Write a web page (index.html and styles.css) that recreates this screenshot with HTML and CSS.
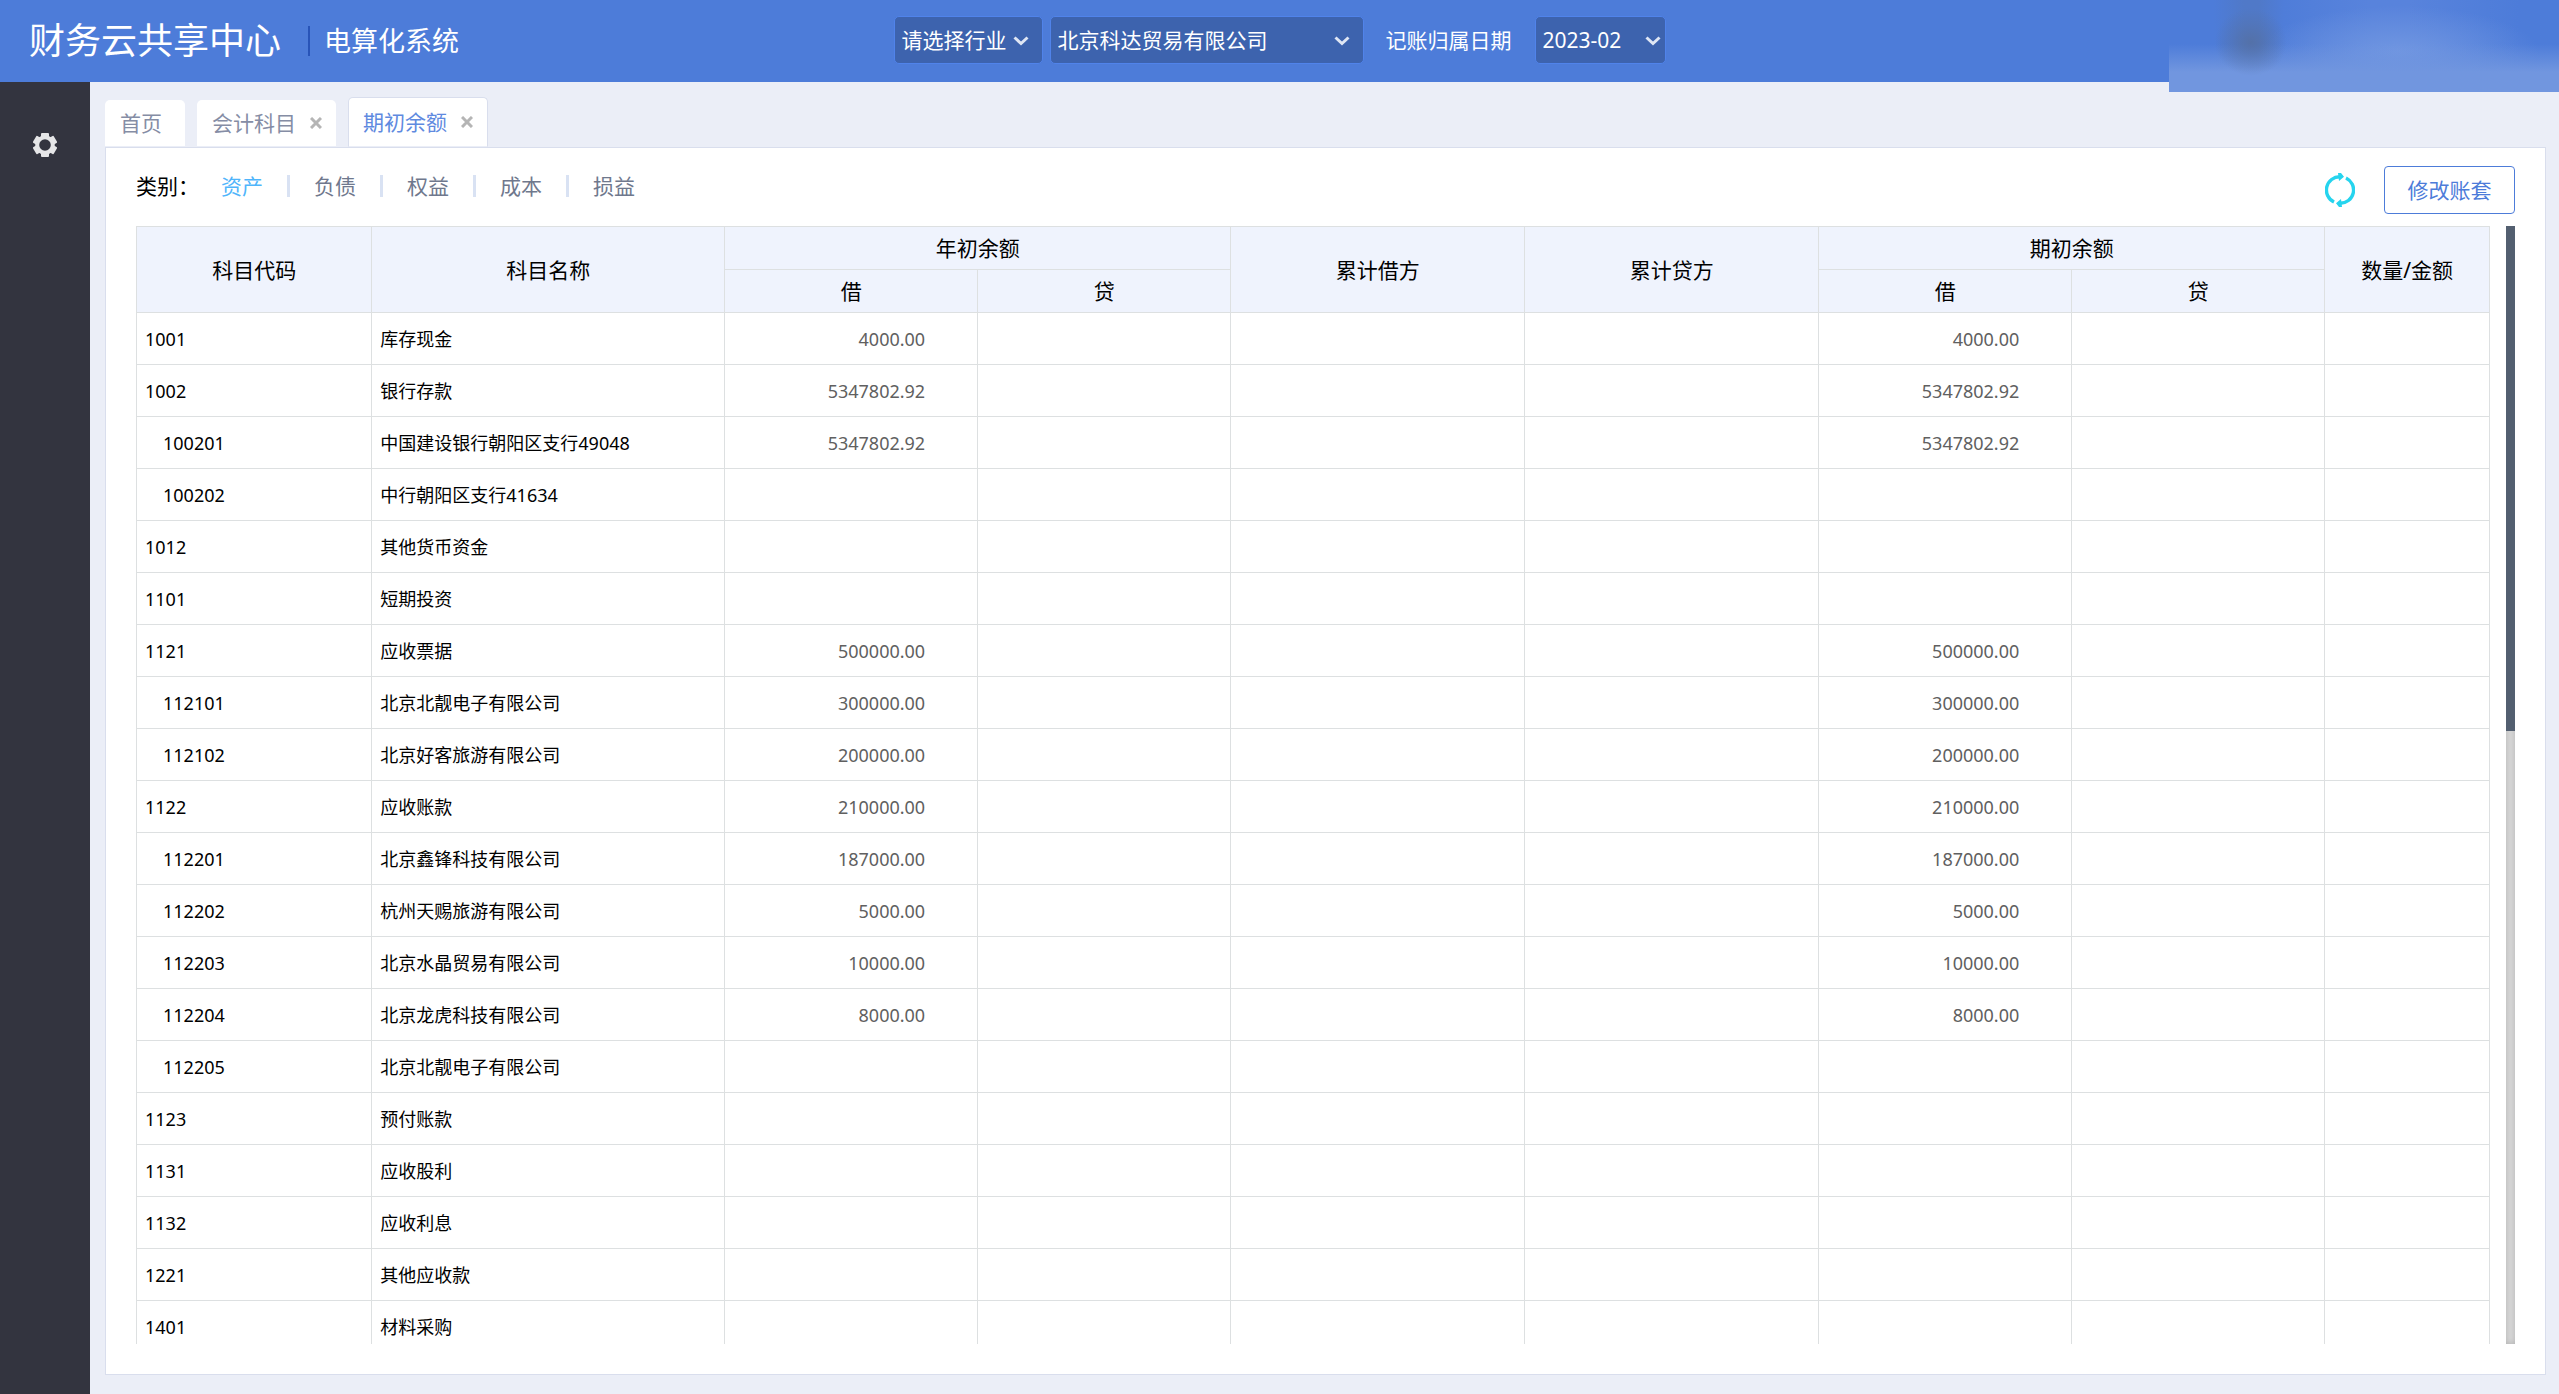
FILE: index.html
```html
<!DOCTYPE html>
<html lang="zh-CN">
<head>
    <meta charset="UTF-8">
    <meta name="viewport" content="width=device-width, initial-scale=1.0">
    <title>财务云共享中心</title>
    <link rel="stylesheet" href="styles.css">
</head>
<body>
    <header class="header">
        <div class="brand">
            <h1>财务云共享中心</h1>
            <span class="system-name">电算化系统</span>
        </div>
        <div class="filters">
            <div class="select-box industry">
                <select aria-label="行业">
                    <option>请选择行业</option>
                </select>
                <svg viewBox="0 0 16 10"><path d="M1.5 1.5 8 7.5 14.5 1.5"/></svg>
            </div>
            <div class="select-box company">
                <select aria-label="公司">
                    <option>北京科达贸易有限公司</option>
                </select>
                <svg viewBox="0 0 16 10"><path d="M1.5 1.5 8 7.5 14.5 1.5"/></svg>
            </div>
            <label for="period">记账归属日期</label>
            <div class="select-box period">
                <select id="period">
                    <option>2023-02</option>
                </select>
                <svg viewBox="0 0 16 10"><path d="M1.5 1.5 8 7.5 14.5 1.5"/></svg>
            </div>
        </div>
        <div class="user-area"></div>
    </header>

    <div class="layout">
        <aside class="sidebar">
            <button class="icon-button" aria-label="设置">
                <svg class="gear" viewBox="-12 -12 24 24">
                    <circle r="7.8"/>
                    <rect x="-4" y="-12" width="8" height="5" rx="1"/>
                    <rect x="-4" y="-12" width="8" height="5" rx="1" transform="rotate(60)"/>
                    <rect x="-4" y="-12" width="8" height="5" rx="1" transform="rotate(120)"/>
                    <rect x="-4" y="-12" width="8" height="5" rx="1" transform="rotate(180)"/>
                    <rect x="-4" y="-12" width="8" height="5" rx="1" transform="rotate(240)"/>
                    <rect x="-4" y="-12" width="8" height="5" rx="1" transform="rotate(300)"/>
                </svg>
            </button>
        </aside>

        <main class="main">
            <nav class="tabs">
                <div class="tab"><a href="#">首页</a></div>
                <div class="tab">
                    <a href="#">会计科目</a>
                    <button class="close" aria-label="关闭会计科目"><svg viewBox="0 0 12 12"><path d="M1 1l10 10M11 1L1 11"/></svg></button>
                </div>
                <div class="tab active">
                    <a href="#">期初余额</a>
                    <button class="close" aria-label="关闭期初余额"><svg viewBox="0 0 12 12"><path d="M1 1l10 10M11 1L1 11"/></svg></button>
                </div>
            </nav>

            <section class="panel">
                <div class="toolbar">
                    <span class="category-label">类别：</span>
                    <ul class="categories">
                        <li><a href="#" class="current">资产</a></li>
                        <li><a href="#">负债</a></li>
                        <li><a href="#">权益</a></li>
                        <li><a href="#">成本</a></li>
                        <li><a href="#">损益</a></li>
                    </ul>
                    <div class="actions">
                        <button class="icon-button" aria-label="刷新">
                            <svg class="refresh" viewBox="0 0 30 34">
                                <path class="arc" d="M9 29A13.300 13.300 0 0 1 15 3.700M21 5A13.300 13.300 0 0 1 15 30.300"/>
                                <path class="head" d="M13 0h3l3 3.700-5 4.300zM17 34h-3l-3-3.700 5-4.300z"/>
                            </svg>
                        </button>
                        <button class="edit-button">修改账套</button>
                    </div>
                </div>

                <div class="table-area">
                    <div class="table-scroll">
                        <table>
                            <colgroup>
                                <col class="col-code">
                                <col class="col-name">
                                <col class="col-balance">
                                <col class="col-balance">
                                <col class="col-total">
                                <col class="col-total">
                                <col class="col-balance">
                                <col class="col-balance">
                                <col class="col-quantity">
                            </colgroup>
                            <thead>
                                <tr>
                                    <th rowspan="2">科目代码</th>
                                    <th rowspan="2">科目名称</th>
                                    <th colspan="2">年初余额</th>
                                    <th rowspan="2">累计借方</th>
                                    <th rowspan="2">累计贷方</th>
                                    <th colspan="2">期初余额</th>
                                    <th rowspan="2">数量/金额</th>
                                </tr>
                                <tr>
                                    <th>借</th>
                                    <th>贷</th>
                                    <th>借</th>
                                    <th>贷</th>
                                </tr>
                            </thead>
                            <tbody id="accounts"></tbody>
                        </table>
                    </div>
                    <div class="scrollbar"><div class="thumb"></div></div>
                </div>
            </section>
        </main>
    </div>

    <script src="script.js"></script>
</body>
</html>
```

FILE: styles.css
```css
* {
    margin: 0;
    padding: 0;
    box-sizing: border-box;
}

body {
    font-family: "Noto Sans", "Noto Sans CJK SC", sans-serif;
    font-size: 21px;
    line-height: 30px;
    height: 100vh;
    display: flex;
    flex-direction: column;
    background: #ebeef7;
    color: #000;
    overflow: hidden;
}

a {
    color: inherit;
    text-decoration: none;
}

button,
select {
    font: inherit;
    color: inherit;
    background: none;
    border: none;
    cursor: pointer;
}

svg {
    display: block;
}

/* Header */
.header {
    position: relative;
    flex: none;
    height: 82px;
    display: grid;
    grid-template-columns: 1fr auto 1fr;
    align-items: center;
    background: #4d7cd9;
    color: #fff;
}

.brand {
    display: flex;
    align-items: center;
    padding-left: 29px;
}

.brand h1 {
    font-size: 36px;
    font-weight: 400;
    line-height: 48px;
}

.system-name {
    margin-left: 27px;
    padding-left: 14px;
    border-left: 2px solid #2854b8;
    font-size: 27px;
    line-height: 30px;
}

.filters {
    display: flex;
    align-items: center;
    padding-bottom: 2px;
}

.filters label {
    margin: 0 23px 0 22px;
}

.select-box {
    position: relative;
}

.select-box select {
    appearance: none;
    width: 100%;
    height: 48px;
    padding: 0 7px;
    background: #3d63ae;
    border: 1px solid #5083ea;
    border-radius: 5px;
}

.select-box svg {
    position: absolute;
    right: 14px;
    top: 20px;
    width: 16px;
    height: 10px;
    fill: none;
    stroke: #dfe6f4;
    stroke-width: 3;
    pointer-events: none;
}

.industry {
    width: 149px;
    margin-right: 7px;
}

.company {
    width: 314px;
}

.period {
    width: 131px;
}

.period .period-arrow,
.period svg {
    right: 5px;
}

.user-area {
    position: absolute;
    top: 0;
    right: 0;
    width: 390px;
    height: 92px;
    background:
        radial-gradient(ellipse 36px 34px at 82px 42px, rgba(84, 112, 165, 0.9), rgba(84, 112, 165, 0.4) 50%, rgba(84, 112, 165, 0)),
        linear-gradient(to bottom, rgba(113, 150, 223, 0) 44px, #7196df 72px),
        radial-gradient(ellipse 140px 46px at 230px 52px, #7096e1, rgba(112, 150, 225, 0)),
        linear-gradient(to right, #4d7cd9 45px, #5079c8 75px, #5079c8 90px, #4f7dd9 115px, #5883dc 200px, #5883dc 240px, #4d7cd9 350px);
}

/* Page body */
.layout {
    flex: 1;
    min-height: 0;
    display: flex;
}

.sidebar {
    width: 90px;
    padding-top: 51px;
    display: flex;
    justify-content: center;
    align-items: flex-start;
    background: #33343f;
}

.gear {
    width: 24px;
    height: 24px;
    fill: #e6e6e8;
}

.gear circle {
    fill: none;
    stroke: #e6e6e8;
    stroke-width: 4;
}

.main {
    flex: 1;
    min-width: 0;
    display: flex;
    flex-direction: column;
    padding: 15px 13px 19px 15px;
}

.tabs {
    display: flex;
    align-items: flex-end;
    gap: 12px;
}

.tab {
    height: 47px;
    display: flex;
    align-items: center;
    gap: 14px;
    padding: 0 14px 0 15px;
    background: #fff;
    border-radius: 5px 5px 0 0;
    border-bottom: 1px solid #ebeef7;
    color: #858da5;
}

.tab:first-child {
    padding-right: 23px;
}

.tab.active {
    height: 50px;
    padding: 0 14px;
    border: 1px solid #d9deed;
    border-bottom-color: #ebeef7;
    color: #5f8ae0;
}

.close {
    width: 12px;
    height: 12px;
}

.close svg {
    width: 12px;
    height: 12px;
    stroke: #b5b5b5;
    stroke-width: 3;
}

.panel {
    flex: 1;
    min-height: 0;
    display: flex;
    flex-direction: column;
    padding: 18px 30px 30px;
    background: #fff;
    border: 1px solid #d9deed;
}

.toolbar {
    display: flex;
    align-items: flex-start;
    height: 60px;
}

.category-label,
.categories {
    padding-top: 5px;
}

.category-label {
    width: 85px;
}

.categories {
    display: flex;
    list-style: none;
    color: #6f788d;
}

.categories li {
    display: flex;
    align-items: center;
}

.categories li + li::before {
    content: "";
    width: 3px;
    height: 22px;
    margin: 0 24px;
    background: #d9e2f3;
}

.categories .current {
    color: #4fb5fb;
}

.actions {
    margin-left: auto;
    display: flex;
    align-items: center;
    gap: 29px;
}

.refresh {
    width: 30px;
    height: 34px;
}

.refresh .arc {
    fill: none;
    stroke: #26d4ee;
    stroke-width: 3.4;
}

.refresh .head {
    fill: #26d4ee;
}

.edit-button {
    width: 131px;
    height: 48px;
    border: 1px solid #4d7cd9;
    border-radius: 4px;
    color: #4d7cd9;
}

/* Balance table */
.table-area {
    flex: 1;
    min-height: 0;
    display: flex;
    gap: 16px;
}

.table-scroll {
    flex: 1;
    overflow: hidden;
}

table {
    width: 100%;
    table-layout: fixed;
    border-collapse: collapse;
}

.col-code {
    width: 10%;
}

.col-name {
    width: 15%;
}

.col-balance {
    width: 10.75%;
}

.col-total {
    width: 12.5%;
}

.col-quantity {
    width: 7%;
}

th,
td {
    border: 1px solid #dde0e1;
}

th {
    height: 43px;
    background: #eff3fd;
    font-weight: 400;
}

td {
    height: 52px;
    padding: 0 8px;
    font-size: 18px;
}

td.child {
    padding-left: 26px;
}

td.amount {
    padding-right: 52px;
    text-align: right;
    color: #606060;
}

.scrollbar {
    width: 9px;
    background: #dadada;
    box-shadow: inset 0 0 6px rgba(0, 0, 0, 0.2);
}

.thumb {
    height: 505px;
    background: #535f70;
}
```

FILE: script.js
```js
// code, name, debit balance
const accounts = [
    ['1001', '库存现金', '4000.00'],
    ['1002', '银行存款', '5347802.92'],
    ['100201', '中国建设银行朝阳区支行49048', '5347802.92'],
    ['100202', '中行朝阳区支行41634', ''],
    ['1012', '其他货币资金', ''],
    ['1101', '短期投资', ''],
    ['1121', '应收票据', '500000.00'],
    ['112101', '北京北靓电子有限公司', '300000.00'],
    ['112102', '北京好客旅游有限公司', '200000.00'],
    ['1122', '应收账款', '210000.00'],
    ['112201', '北京鑫锋科技有限公司', '187000.00'],
    ['112202', '杭州天赐旅游有限公司', '5000.00'],
    ['112203', '北京水晶贸易有限公司', '10000.00'],
    ['112204', '北京龙虎科技有限公司', '8000.00'],
    ['112205', '北京北靓电子有限公司', ''],
    ['1123', '预付账款', ''],
    ['1131', '应收股利', ''],
    ['1132', '应收利息', ''],
    ['1221', '其他应收款', ''],
    ['1401', '材料采购', '']
];

document.getElementById('accounts').innerHTML = accounts.map(([code, name, debit]) => `
    <tr>
        <td class="${code.length > 4 ? 'child' : ''}">${code}</td>
        <td>${name}</td>
        <td class="amount">${debit}</td>
        <td></td>
        <td></td>
        <td></td>
        <td class="amount">${debit}</td>
        <td></td>
        <td></td>
    </tr>
`).join('');
```
